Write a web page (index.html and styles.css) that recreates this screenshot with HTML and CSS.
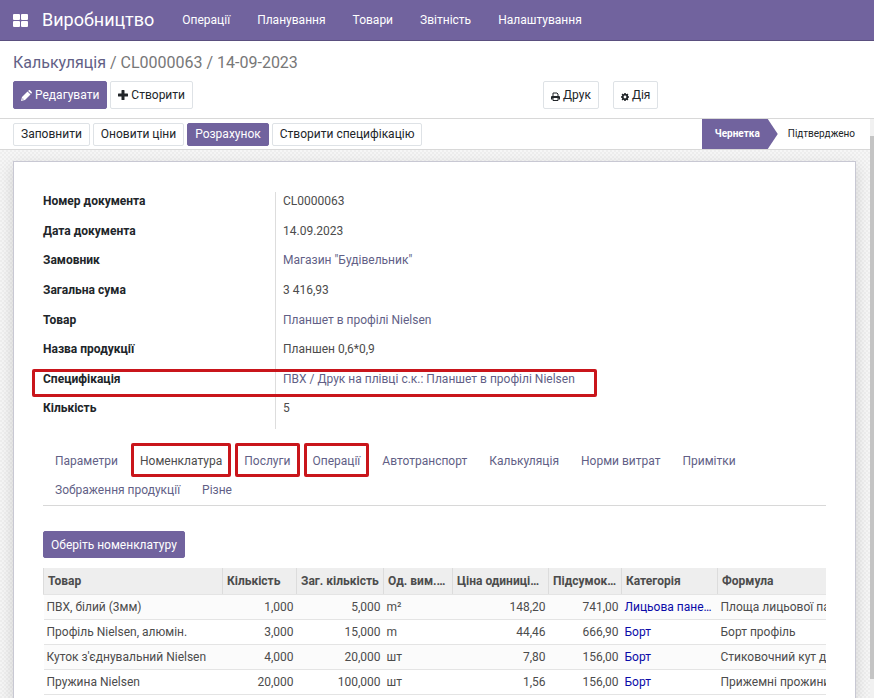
FILE: index.html
```html
<!DOCTYPE html>
<html lang="uk">
<head>
    <meta charset="UTF-8">
    <meta name="viewport" content="width=device-width, initial-scale=1.0">
    <title>Калькуляція / CL0000063</title>
    <link rel="stylesheet" href="styles.css">
</head>
<body>
    <nav class="navbar">
        <button type="button" class="apps-btn" aria-label="Меню">
            <svg width="16" height="13" viewBox="0 0 16 13" fill="currentColor">
                <rect x="0" y="0" width="7" height="6" rx="1"/>
                <rect x="8" y="0" width="7" height="6" rx="1"/>
                <rect x="0" y="7" width="7" height="6" rx="1"/>
                <rect x="8" y="7" width="7" height="6" rx="1"/>
            </svg>
        </button>
        <a href="#" class="brand">Виробництво</a>
        <div class="menu">
            <a href="#">Операції</a>
            <a href="#">Планування</a>
            <a href="#">Товари</a>
            <a href="#">Звітність</a>
            <a href="#">Налаштування</a>
        </div>
    </nav>

    <header class="control-panel">
        <div class="breadcrumb"><a href="#">Калькуляція</a> / CL0000063 / 14-09-2023</div>
        <div class="cp-row">
            <div class="cp-left">
                <button type="button" class="btn btn-primary">
                    <svg width="11" height="11" viewBox="0 0 11 11" fill="currentColor">
                        <path d="M0 11 L1 7 L6.5 1.5 L9.5 4.5 L4 10 Z"/>
                        <path d="M7.2 0.9 L7.8 0.3 Q8.4 -0.2 9 0.3 L10.7 2 Q11.2 2.6 10.7 3.2 L10.1 3.8 Z"/>
                        <path d="M1.2 9.8 L1.7 8.2 L2.8 9.3 Z" fill="#71639e"/>
                    </svg>
                    Редагувати
                </button>
                <button type="button" class="btn">
                    <svg width="10" height="10" viewBox="0 0 10 10" fill="currentColor">
                        <path d="M4 0 H6 Q6.500 0 6.500 0.500 V3.500 H9.500 Q10 3.500 10 4 V6 Q10 6.500 9.500 6.500 H6.500 V9.500 Q6.500 10 6 10 H4 Q3.500 10 3.500 9.500 V6.500 H0.500 Q0 6.500 0 6 V4 Q0 3.500 0.500 3.500 H3.500 V0.500 Q3.500 0 4 0 Z"/>
                    </svg>
                    Створити
                </button>
            </div>
            <div class="cp-right">
                <button type="button" class="btn">
                    <svg class="icon-low" width="9" height="9" viewBox="0 0 9 9">
                        <path d="M2 4 V1 H6 L7 2 V4" fill="none" stroke="currentColor"/>
                        <path d="M1 4 H8 Q9 4 9 5 V7.500 H7.500 V6 H1.500 V7.500 H0 V5 Q0 4 1 4 Z" fill="currentColor"/>
                        <path d="M2 6 V8.500 H7 V6" fill="none" stroke="currentColor"/>
                    </svg>
                    Друк
                </button>
                <button type="button" class="btn">
                    <svg class="icon-low" width="8" height="8" viewBox="0 0 8 8">
                        <circle cx="4" cy="4" r="2.300" fill="none" stroke="currentColor" stroke-width="1.800"/>
                        <path d="M4 0 V1.500 M4 6.500 V8 M0 4 H1.500 M6.500 4 H8 M1.100 1.100 L2.200 2.200 M5.800 5.800 L6.900 6.900 M1.100 6.900 L2.200 5.800 M5.800 2.200 L6.900 1.100" stroke="currentColor" stroke-width="1.500"/>
                    </svg>
                    Дія
                </button>
            </div>
        </div>
    </header>

    <div class="content">
        <main class="form-view">
            <div class="statusbar">
                <div class="status-buttons">
                    <button type="button" class="btn btn-sm">Заповнити</button>
                    <button type="button" class="btn btn-sm">Оновити ціни</button>
                    <button type="button" class="btn btn-sm btn-primary">Розрахунок</button>
                    <button type="button" class="btn btn-sm">Створити специфікацію</button>
                </div>
                <div class="states">
                    <span class="state state-active">Чернетка</span>
                    <span class="state">Підтверджено</span>
                </div>
            </div>

            <div class="sheet-bg">
                <div class="sheet">
                    <dl class="fields">
                        <dt>Номер документа</dt>
                        <dd>CL0000063</dd>
                        <dt>Дата документа</dt>
                        <dd>14.09.2023</dd>
                        <dt>Замовник</dt>
                        <dd><a href="#">Магазин "Будівельник"</a></dd>
                        <dt>Загальна сума</dt>
                        <dd>3 416,93</dd>
                        <dt>Товар</dt>
                        <dd><a href="#">Планшет в профілі Nielsen</a></dd>
                        <dt>Назва продукції</dt>
                        <dd>Планшен 0,6*0,9</dd>
                        <dt class="marked-field">Специфікація</dt>
                        <dd><a href="#">ПВХ / Друк на плівці с.к.: Планшет в профілі Nielsen</a></dd>
                        <dt>Кількість</dt>
                        <dd>5</dd>
                    </dl>

                    <div class="tabs">
                        <a href="#">Параметри</a>
                        <a href="#" class="active marked">Номенклатура</a>
                        <a href="#" class="marked">Послуги</a>
                        <a href="#" class="marked">Операції</a>
                        <a href="#">Автотранспорт</a>
                        <a href="#">Калькуляція</a>
                        <a href="#">Норми витрат</a>
                        <a href="#">Примітки</a>
                        <a href="#">Зображення продукції</a>
                        <a href="#">Різне</a>
                    </div>

                    <button type="button" class="btn btn-primary pick-btn">Оберіть номенклатуру</button>

                    <table class="lines">
                        <colgroup>
                            <col class="col-product">
                            <col class="col-qty">
                            <col class="col-total-qty">
                            <col class="col-uom">
                            <col class="col-price">
                            <col class="col-subtotal">
                            <col class="col-category">
                            <col>
                        </colgroup>
                        <thead>
                            <tr>
                                <th>Товар</th>
                                <th>Кількість</th>
                                <th>Заг. кількість</th>
                                <th>Од. вим.…</th>
                                <th>Ціна одиниці…</th>
                                <th>Підсумок…</th>
                                <th>Категорія</th>
                                <th>Формула</th>
                            </tr>
                        </thead>
                        <tbody>
                            <tr>
                                <td>ПВХ, білий (3мм)</td>
                                <td class="num">1,000</td>
                                <td class="num">5,000</td>
                                <td>m²</td>
                                <td class="num">148,20</td>
                                <td class="num">741,00</td>
                                <td><a href="#">Лицьова пане…</a></td>
                                <td class="clip">Площа лицьової пан</td>
                            </tr>
                            <tr>
                                <td>Профіль Nielsen, алюмін.</td>
                                <td class="num">3,000</td>
                                <td class="num">15,000</td>
                                <td>m</td>
                                <td class="num">44,46</td>
                                <td class="num">666,90</td>
                                <td><a href="#">Борт</a></td>
                                <td class="clip">Борт профіль</td>
                            </tr>
                            <tr>
                                <td>Куток з'єднувальний Nielsen</td>
                                <td class="num">4,000</td>
                                <td class="num">20,000</td>
                                <td>шт</td>
                                <td class="num">7,80</td>
                                <td class="num">156,00</td>
                                <td><a href="#">Борт</a></td>
                                <td class="clip">Стиковочний кут для</td>
                            </tr>
                            <tr>
                                <td>Пружина Nielsen</td>
                                <td class="num">20,000</td>
                                <td class="num">100,000</td>
                                <td>шт</td>
                                <td class="num">1,56</td>
                                <td class="num">156,00</td>
                                <td><a href="#">Борт</a></td>
                                <td class="clip">Прижемні прожини</td>
                            </tr>
                        </tbody>
                    </table>
                </div>
            </div>
        </main>
        <div class="scrollbar"><div class="thumb"></div></div>
    </div>
</body>
</html>
```
FILE: styles.css
```css
*,
*::after {
    box-sizing: border-box;
}

body {
    margin: 0;
    height: 100vh;
    overflow: hidden;
    display: flex;
    flex-direction: column;
    font-family: Roboto, "Noto Sans", sans-serif;
    font-size: 12px;
    line-height: 18px;
    color: #4c4c4c;
    background: #fff;
}

a {
    color: #625f86;
    text-decoration: none;
}

/* Navbar */
.navbar {
    display: flex;
    align-items: center;
    flex: none;
    height: 41px;
    padding: 0 13px;
    background: #71639e;
    border-bottom: 1px solid #5a4f7f;
}

.navbar a {
    color: #fff;
}

.apps-btn {
    display: flex;
    padding: 0;
    border: none;
    background: none;
    color: #fff;
    cursor: pointer;
}

.brand {
    margin-left: 13px;
    font-size: 18px;
}

.menu {
    display: flex;
    gap: 27px;
    margin-left: 28px;
}

/* Control panel */
.control-panel {
    flex: none;
    padding: 11px 13px 9px;
    border-bottom: 1px solid #d8d8d8;
}

.breadcrumb {
    font-size: 16px;
    line-height: 22px;
    color: #777;
}

.cp-row {
    display: grid;
    grid-template-columns: 5fr 3fr;
    margin-top: 7px;
}

.cp-left {
    display: flex;
    gap: 3px;
}

.cp-right {
    display: flex;
    gap: 14px;
}

.btn {
    display: flex;
    align-items: center;
    gap: 3px;
    height: 28px;
    padding: 0 7px;
    border: 1px solid #dee2e6;
    border-radius: 2px;
    background: #fff;
    color: #212529;
    font: inherit;
    white-space: nowrap;
    cursor: pointer;
}

.btn-primary {
    background: #71639e;
    border-color: #71639e;
    color: #fff;
}

.btn-sm {
    height: 23px;
}

.icon-low {
    margin-top: 3px;
}

/* Form */
.content {
    display: flex;
    flex: 1;
    min-height: 0;
}

.form-view {
    display: flex;
    flex-direction: column;
    flex: 1;
    min-width: 0;
}

.statusbar {
    display: flex;
    justify-content: space-between;
    align-items: center;
    flex: none;
    height: 31px;
    padding-left: 13px;
    border-bottom: 1px solid #d8d8d8;
}

.status-buttons {
    display: flex;
    gap: 3px;
}

.states {
    display: flex;
    align-self: stretch;
    font-size: 10px;
    color: #212529;
}

.state {
    display: flex;
    align-items: center;
    padding: 0 15px 0 10px;
}

.state-active {
    padding: 0 18px 0 13px;
    background: #71639e;
    color: #fff;
    font-weight: bold;
    clip-path: polygon(0 0, calc(100% - 10px) 0, 100% 50%, calc(100% - 10px) 100%, 0 100%);
}

.sheet-bg {
    display: flex;
    flex: 1;
    min-height: 0;
    padding: 11px 14px 0 13px;
    overflow: hidden;
    background: repeating-conic-gradient(#eee 0 25%, #f6f6f6 0 50%) 0 0 / 4px 4px;
}

.sheet {
    flex: 1;
    min-width: 0;
    padding: 30px 29px 0;
    border: 1px solid #c8c8d3;
    border-bottom: none;
    background: #fff;
    box-shadow: 0 5px 14px rgba(0, 0, 0, 0.15);
}

.fields {
    display: grid;
    grid-template-columns: 232px 1fr;
    grid-template-rows: repeat(8, 1fr);
    height: 237px;
    margin: 0;
}

.fields dt {
    color: #212529;
    font-weight: bold;
}

.fields dd {
    margin: 0;
    padding-left: 7px;
    border-left: 1px solid #ddd;
}

/* Red highlight frames */
.marked-field,
.marked {
    position: relative;
}

.marked-field::after,
.marked::after {
    content: "";
    position: absolute;
    border: 3px solid #c9151b;
    border-radius: 2px;
    pointer-events: none;
}

.marked-field::after {
    top: -1px;
    left: -11px;
    width: 565px;
    height: 28px;
}

.marked::after {
    inset: -4px 2px -1px 2px;
}

/* Tabs */
.tabs {
    display: flex;
    flex-wrap: wrap;
    margin-top: 18px;
    padding-left: 1px;
    border-bottom: 1px solid #d8d8d8;
}

.tabs a {
    padding: 0 11px;
    line-height: 29px;
}

.tabs .active {
    color: #4c4c4c;
}

.pick-btn {
    margin: 25px 0 10px;
    height: 27px;
}

/* Lines */
.lines {
    width: 100%;
    table-layout: fixed;
    border-collapse: collapse;
}

.lines th,
.lines td {
    height: 25px;
    padding: 0 3px;
    overflow: hidden;
    text-align: left;
    white-space: nowrap;
    border-bottom: 1px solid #e4e4e4;
}

.lines th {
    height: 26px;
    padding: 0 0 0 4px;
    background: #eee;
    border-left: 1px solid #dcdcdc;
    font-weight: bold;
}

.lines tbody tr:nth-child(odd) {
    background: #fbfbfb;
}

.lines a {
    color: #0a0aa8;
}

.lines .num {
    text-align: right;
}

.lines .clip {
    padding-right: 0;
}

.col-product { width: 179px; }
.col-qty { width: 74px; }
.col-total-qty { width: 87px; }
.col-uom { width: 69px; }
.col-price { width: 96px; }
.col-subtotal { width: 73px; }
.col-category { width: 96px; }

.scrollbar {
    width: 4px;
    padding: 17px 0 19px;
    background: #f1f1f1;
}

.thumb {
    height: 100%;
    background: #c4c4c4;
}
```
